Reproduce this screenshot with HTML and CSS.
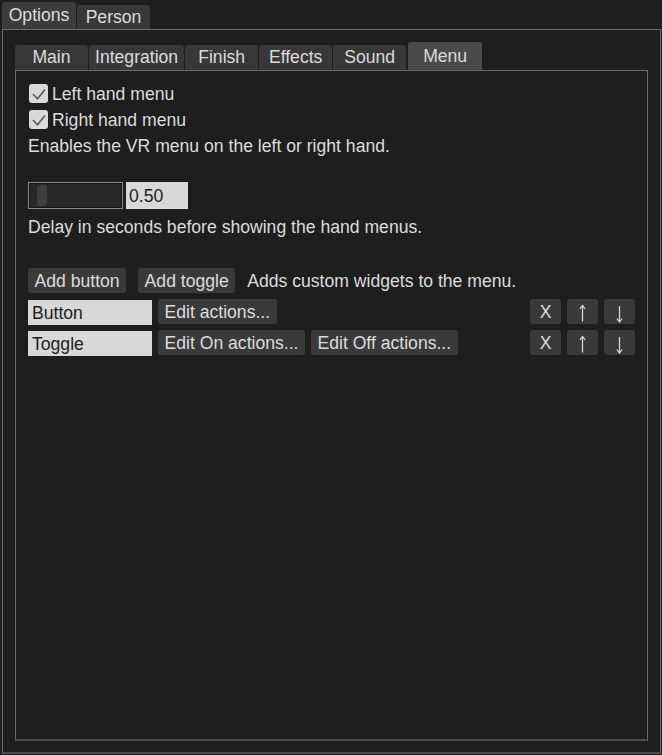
FILE: index.html
```html
<!DOCTYPE html>
<html>
<head>
<meta charset="utf-8">
<link rel="stylesheet" href="styles.css">
</head>
<body>
<div class="window">
  <div class="tabs outer-tabs">
    <div class="tab outer-tab active">Options</div>
    <div class="tab outer-tab">Person</div>
  </div>
  <div class="panel outer-panel">
    <div class="tabs inner-tabs">
      <div class="tab inner-tab">Main</div>
      <div class="tab inner-tab">Integration</div>
      <div class="tab inner-tab">Finish</div>
      <div class="tab inner-tab">Effects</div>
      <div class="tab inner-tab">Sound</div>
      <div class="tab inner-tab active">Menu</div>
    </div>
    <div class="panel inner-panel">
      <div class="check-row">
        <span class="checkbox"><svg width="19" height="19" viewBox="0 0 19 19"><polyline points="4,10 8.5,14.8 16,5.5" fill="none" stroke="#555" stroke-width="1.5"/></svg></span>
        <span class="label">Left hand menu</span>
      </div>
      <div class="check-row">
        <span class="checkbox"><svg width="19" height="19" viewBox="0 0 19 19"><polyline points="4,10 8.5,14.8 16,5.5" fill="none" stroke="#555" stroke-width="1.5"/></svg></span>
        <span class="label">Right hand menu</span>
      </div>
      <div class="text-line">Enables the VR menu on the left or right hand.</div>

      <div class="slider-row">
        <div class="slider"><div class="slider-track"><div class="slider-thumb"></div></div></div>
        <div class="field number-field">0.50</div>
      </div>
      <div class="text-line delay">Delay in seconds before showing the hand menus.</div>

      <div class="row add-row">
        <div class="btn">Add button</div>
        <div class="btn">Add toggle</div>
        <div class="row-text">Adds custom widgets to the menu.</div>
      </div>
      <div class="row item-row">
        <div class="field name-field">Button</div>
        <div class="btn">Edit actions...</div>
        <div class="tools">
          <div class="btn icon-btn">X</div>
          <div class="btn icon-btn"><svg width="31" height="25" viewBox="0 0 31 25"><path d="M15.5 6.5 V22.5 M12.8 10 L15.5 6.5 L18.2 10" fill="none" stroke="#dcdcdc" stroke-width="1.2"/></svg></div>
          <div class="btn icon-btn"><svg width="31" height="25" viewBox="0 0 31 25"><path d="M15.5 7 V23 M12.8 19.5 L15.5 23 L18.2 19.5" fill="none" stroke="#dcdcdc" stroke-width="1.2"/></svg></div>
        </div>
      </div>
      <div class="row item-row">
        <div class="field name-field">Toggle</div>
        <div class="btn">Edit On actions...</div>
        <div class="btn">Edit Off actions...</div>
        <div class="tools">
          <div class="btn icon-btn">X</div>
          <div class="btn icon-btn"><svg width="31" height="25" viewBox="0 0 31 25"><path d="M15.5 6.5 V22.5 M12.8 10 L15.5 6.5 L18.2 10" fill="none" stroke="#dcdcdc" stroke-width="1.2"/></svg></div>
          <div class="btn icon-btn"><svg width="31" height="25" viewBox="0 0 31 25"><path d="M15.5 7 V23 M12.8 19.5 L15.5 23 L18.2 19.5" fill="none" stroke="#dcdcdc" stroke-width="1.2"/></svg></div>
        </div>
      </div>
    </div>
  </div>
</div>
</body>
</html>
```

FILE: styles.css
```css
* { box-sizing: border-box; }
html, body {
  margin: 0;
  padding: 0;
  background: #1e1e1e;
}
body {
  font-family: "Liberation Sans", Arial, sans-serif;
  font-size: 17.6px;
  color: #dcdcdc;
  height: 755px;
  overflow: hidden;
}
.window {
  height: 755px;
  padding: 2px 1px 1px 2px;
  display: flex;
  flex-direction: column;
}
.tabs {
  display: flex;
  align-items: flex-end;
  gap: 1px;
}
.tab {
  min-width: 73px;
  padding: 0 6px;
  text-align: center;
  white-space: nowrap;
  background: #383838;
  color: #dcdcdc;
  border-radius: 3px 3px 0 0;
}
.outer-tabs { height: 27px; }
.outer-tab { height: 24px; line-height: 24px; }
.outer-tab.active { height: 27px; line-height: 27px; min-width: 74px; background: #3c3c3c; }
.inner-tabs { height: 28px; }
.inner-tab { height: 25px; line-height: 25px; }
.inner-tab.active { height: 28px; line-height: 28px; background: #4a4a4a; min-width: 74px; margin-left: 1px; }

.panel {
  border: 1px solid #6c6c6c;
  border-bottom: 2px solid #4a4a4a;
  display: flex;
  flex-direction: column;
}
.outer-panel {
  flex: 1;
  padding: 12px 12px 11px 12px;
}
.inner-panel {
  flex: 1;
  padding: 10px 12px 0 12px;
}
.check-row {
  display: flex;
  align-items: flex-start;
  height: 26px;
  line-height: 26px;
}
.checkbox {
  width: 19px;
  height: 19px;
  margin: 3px 4px 0 1px;
  background: #d9d9d9;
  border-radius: 3px;
  display: block;
}
.checkbox svg { display: block; }
.text-line {
  height: 26px;
  line-height: 26px;
  white-space: nowrap;
}
.slider-row {
  display: flex;
  margin-top: 23px;
  height: 27px;
}
.slider {
  width: 95px;
  height: 27px;
  border: 1px solid #8a8a8a;
  background: #151515;
  padding: 1px;
}
.slider-track {
  height: 100%;
  background: #282828;
  padding: 1px 0 1px 7px;
  display: flex;
}
.slider-thumb {
  width: 10px;
  background: #3e3e3e;
  border-radius: 3px;
}
.field {
  background: #d8d8d8;
  color: #1e1e1e;
  padding: 0 4px;
  white-space: nowrap;
}
.number-field {
  margin-left: 3px;
  width: 62px;
  height: 27px;
  line-height: 28px;
  padding-left: 3px;
}
.delay { margin-top: 5px; }
.row {
  display: flex;
  align-items: center;
  height: 25px;
}
.add-row { margin-top: 28px; gap: 12px; }
.item-row { margin-top: 6px; gap: 6px; }
.btn {
  height: 25px;
  line-height: 26px;
  padding: 0 6.5px;
  background: #3a3a3a;
  border-radius: 3px;
  color: #dcdcdc;
  white-space: nowrap;
}
.row-text { white-space: nowrap; line-height: 26px; }
.name-field {
  width: 124px;
  height: 25px;
  line-height: 26px;
  margin-top: 1px;
}
.tools {
  margin-left: auto;
  display: flex;
  gap: 6px;
}
.icon-btn {
  width: 31px;
  padding: 0;
  text-align: center;
}
.icon-btn svg { display: block; }
```
